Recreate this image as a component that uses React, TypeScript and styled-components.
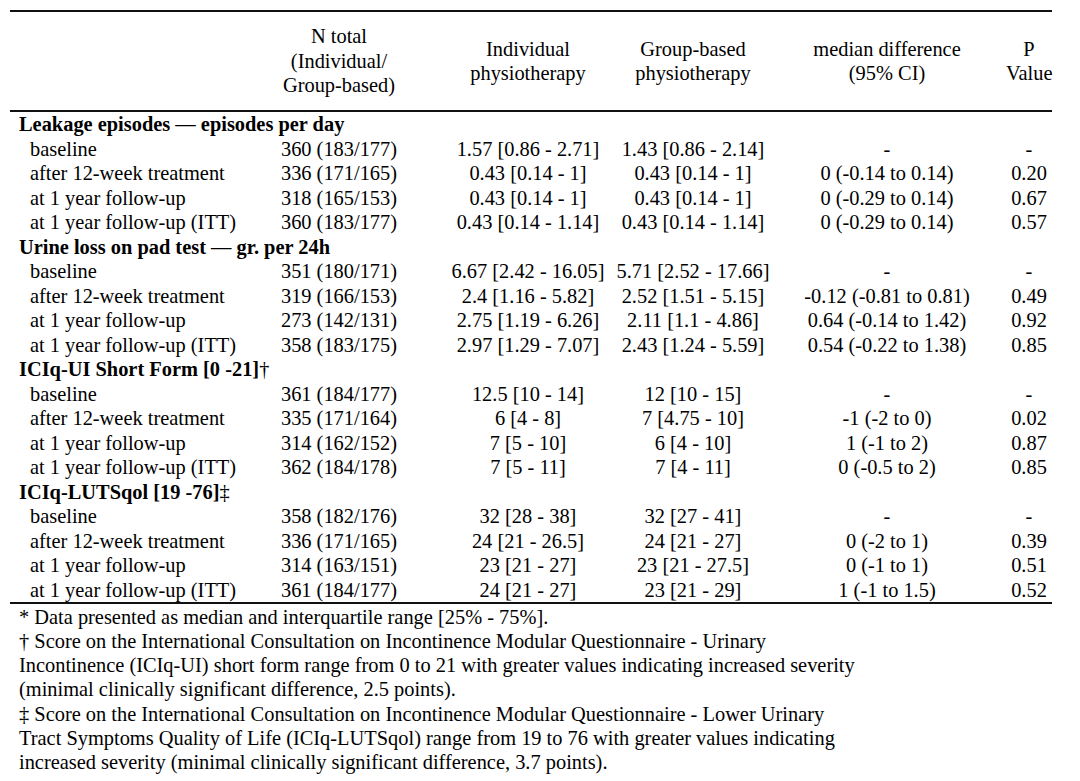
import React from "react";
import styled, { createGlobalStyle } from "styled-components";

const Global = createGlobalStyle`
  html, body { margin: 0; padding: 0; background: #fff; }
  body { font-family: "Liberation Serif", "Times New Roman", serif; color: #000; }
`;

const Page = styled.div`
  padding: 10px 0 0 10px;
  width: 1042px;
`;

const COLS = "230px 198px 180px 150px 238px 46px";

const Rule = styled.div<{ $w: number }>`
  height: ${(p) => p.$w}px;
  background: #111;
`;

const HeadRow = styled.div`
  display: grid;
  grid-template-columns: ${COLS};
  height: 98px;
  align-items: center;
  font-size: 20.4px;
  line-height: 24.5px;
`;

const HeadCell = styled.div`
  text-align: center;
  white-space: nowrap;
`;

const Row = styled.div`
  display: grid;
  grid-template-columns: ${COLS};
  height: 24.5px;
  font-size: 20.4px;
  line-height: 24.5px;
  white-space: nowrap;
`;

const Label = styled.div`
  padding-left: 20px;
`;

const Cell = styled.div`
  display: flex;
  justify-content: center;
`;

const Section = styled.div`
  height: 24.5px;
  font-size: 20.4px;
  line-height: 24.5px;
  font-weight: bold;
  padding-left: 9px;
  white-space: nowrap;
`;

const Plain = styled.span`
  font-weight: normal;
`;

const Notes = styled.div`
  font-size: 20.4px;
  line-height: 24.3px;
  padding-left: 9px;
  padding-top: 1px;
  white-space: nowrap;
`;

type R = [string, string, string, string, string, string];

const sections: { title: React.ReactNode; rows: R[] }[] = [
  {
    title: (
      <>
        Leakage episodes <Plain>—</Plain> episodes per day
      </>
    ),
    rows: [
      ["baseline", "360 (183/177)", "1.57 [0.86 - 2.71]", "1.43 [0.86 - 2.14]", "-", "-"],
      ["after 12-week treatment", "336 (171/165)", "0.43 [0.14 - 1]", "0.43 [0.14 - 1]", "0 (-0.14 to 0.14)", "0.20"],
      ["at 1 year follow-up", "318 (165/153)", "0.43 [0.14 - 1]", "0.43 [0.14 - 1]", "0 (-0.29 to 0.14)", "0.67"],
      ["at 1 year follow-up (ITT)", "360 (183/177)", "0.43 [0.14 - 1.14]", "0.43 [0.14 - 1.14]", "0 (-0.29 to 0.14)", "0.57"],
    ],
  },
  {
    title: (
      <>
        Urine loss on pad test <Plain>—</Plain> gr. per 24h
      </>
    ),
    rows: [
      ["baseline", "351 (180/171)", "6.67 [2.42 - 16.05]", "5.71 [2.52 - 17.66]", "-", "-"],
      ["after 12-week treatment", "319 (166/153)", "2.4 [1.16 - 5.82]", "2.52 [1.51 - 5.15]", "-0.12 (-0.81 to 0.81)", "0.49"],
      ["at 1 year follow-up", "273 (142/131)", "2.75 [1.19 - 6.26]", "2.11 [1.1 - 4.86]", "0.64 (-0.14 to 1.42)", "0.92"],
      ["at 1 year follow-up (ITT)", "358 (183/175)", "2.97 [1.29 - 7.07]", "2.43 [1.24 - 5.59]", "0.54 (-0.22 to 1.38)", "0.85"],
    ],
  },
  {
    title: (
      <>
        ICIq-UI Short Form [0 -21]<Plain>†</Plain>
      </>
    ),
    rows: [
      ["baseline", "361 (184/177)", "12.5 [10 - 14]", "12 [10 - 15]", "-", "-"],
      ["after 12-week treatment", "335 (171/164)", "6 [4 - 8]", "7 [4.75 - 10]", "-1 (-2 to 0)", "0.02"],
      ["at 1 year follow-up", "314 (162/152)", "7 [5 - 10]", "6 [4 - 10]", "1 (-1 to 2)", "0.87"],
      ["at 1 year follow-up (ITT)", "362 (184/178)", "7 [5 - 11]", "7 [4 - 11]", "0 (-0.5 to 2)", "0.85"],
    ],
  },
  {
    title: (
      <>
        ICIq-LUTSqol [19 -76]<Plain>‡</Plain>
      </>
    ),
    rows: [
      ["baseline", "358 (182/176)", "32 [28 - 38]", "32 [27 - 41]", "-", "-"],
      ["after 12-week treatment", "336 (171/165)", "24 [21 - 26.5]", "24 [21 - 27]", "0 (-2 to 1)", "0.39"],
      ["at 1 year follow-up", "314 (163/151)", "23 [21 - 27]", "23 [21 - 27.5]", "0 (-1 to 1)", "0.51"],
      ["at 1 year follow-up (ITT)", "361 (184/177)", "24 [21 - 27]", "23 [21 - 29]", "1 (-1 to 1.5)", "0.52"],
    ],
  },
];

export default function App() {
  return (
    <>
      <Global />
      <Page>
        <Rule $w={2} />
        <HeadRow>
          <div />
          <HeadCell>
            N total
            <br />
            (Individual/
            <br />
            Group-based)
          </HeadCell>
          <HeadCell>
            Individual
            <br />
            physiotherapy
          </HeadCell>
          <HeadCell>
            Group-based
            <br />
            physiotherapy
          </HeadCell>
          <HeadCell>
            median difference
            <br />
            (95% CI)
          </HeadCell>
          <HeadCell>
            P
            <br />
            Value
          </HeadCell>
        </HeadRow>
        <Rule $w={2} />
        {sections.map((s, i) => (
          <React.Fragment key={i}>
            <Section>{s.title}</Section>
            {s.rows.map((r, j) => (
              <Row key={j}>
                <Label>{r[0]}</Label>
                <Cell>{r[1]}</Cell>
                <Cell>{r[2]}</Cell>
                <Cell>{r[3]}</Cell>
                <Cell>{r[4]}</Cell>
                <Cell>{r[5]}</Cell>
              </Row>
            ))}
          </React.Fragment>
        ))}
        <Rule $w={1.5} />
        <Notes>
          * Data presented as median and interquartile range [25% - 75%].
          <br />
          † Score on the International Consultation on Incontinence Modular Questionnaire - Urinary
          <br />
          Incontinence (ICIq-UI) short form range from 0 to 21 with greater values indicating increased severity
          <br />
          (minimal clinically significant difference, 2.5 points).
          <br />
          ‡ Score on the International Consultation on Incontinence Modular Questionnaire - Lower Urinary
          <br />
          Tract Symptoms Quality of Life (ICIq-LUTSqol) range from 19 to 76 with greater values indicating
          <br />
          increased severity (minimal clinically significant difference, 3.7 points).
        </Notes>
      </Page>
    </>
  );
}
